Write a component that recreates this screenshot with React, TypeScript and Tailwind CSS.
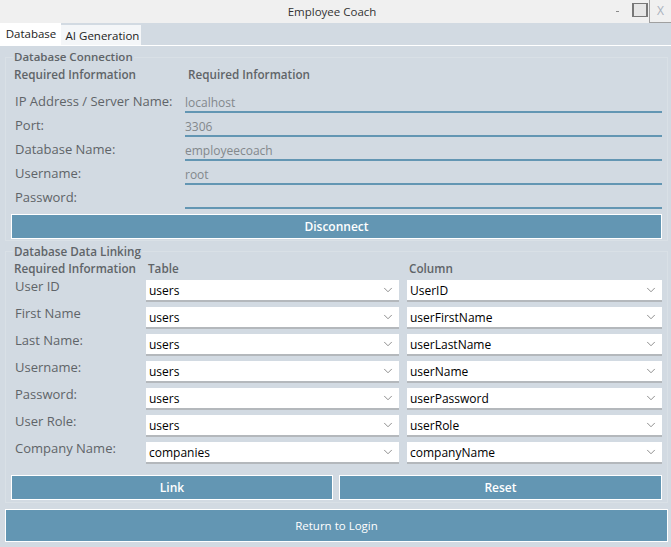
import React from "react";
import { ChevronDown } from "lucide-react";

const connection = [
  { label: "IP Address / Server Name:", value: "localhost" },
  { label: "Port:", value: "3306" },
  { label: "Database Name:", value: "employeecoach" },
  { label: "Username:", value: "root" },
  { label: "Password:", value: "" },
];

const links = [
  { label: "User ID", table: "users", column: "UserID" },
  { label: "First Name", table: "users", column: "userFirstName" },
  { label: "Last Name:", table: "users", column: "userLastName" },
  { label: "Username:", table: "users", column: "userName" },
  { label: "Password:", table: "users", column: "userPassword" },
  { label: "User Role:", table: "users", column: "userRole" },
  { label: "Company Name:", table: "companies", column: "companyName" },
];

function Select({ value, className }: { value: string; className: string }) {
  return (
    <div className={`h-[22px] bg-white border-b-2 border-[#b4b8bc] flex items-center justify-between pl-[3px] pr-[4px] text-[12px] text-black ${className}`}>
      <span className="pt-px">{value}</span>
      <ChevronDown className="w-[14px] h-[14px] text-[#666666]" strokeWidth={1.25} />
    </div>
  );
}

function BlueButton({ children, className }: { children: React.ReactNode; className: string }) {
  return (
    <div className={`bg-[#6396b3] border border-white flex items-center justify-center text-white ${className}`}>
      {children}
    </div>
  );
}

export default function App() {
  return (
    <div className="w-[671px] h-[547px] overflow-hidden bg-[#f0f0f0] text-[#5f6468] font-['Open_Sans','Noto_Sans',sans-serif]">
      {/* Title bar */}
      <div className="relative h-[23px] flex items-center justify-center text-[11.5px] text-[#333333]">
        <span className="-ml-[7px]">Employee Coach</span>
        <span className="absolute left-[616px] top-[11px] w-[3px] h-px bg-[#8a8a8a]" />
        <span className="absolute left-[632px] top-[3px] w-[16px] h-[14px] border-x-2 border-y border-[#777777] bg-[#e6e6e6]" />
        <span className="absolute left-[649px] top-0 w-[22px] h-[23px] border-l border-b border-[#a0a0a0] flex items-center justify-center text-[12px] text-[#a9b0bd]">X</span>
      </div>

      {/* Tabs */}
      <div className="h-[23px] bg-[#d2dae2] flex items-start border-b border-white">
        <div className="h-[22px] w-[61px] pl-px bg-white flex items-center justify-center text-[11.5px] text-[#222222]">Database</div>
        <div className="mt-[2px] pt-px pl-[3px] h-[20px] w-[80px] bg-[#f4f6f8] flex items-center justify-center text-[11.5px] text-[#222222]">AI Generation</div>
      </div>

      <div className="h-[501px] bg-[#d2dae2] px-[2px]">
        <div className="h-[497px] px-[3px] pt-[4px]">
          {/* Database connection */}
          <fieldset className="h-[191px] border border-[#d9e0e6] px-[5px] mb-[3px]">
            <legend className="ml-[2px] px-[1px] text-[11.5px] font-semibold leading-[14px]">Database Connection</legend>
            <div className="flex h-[18px] items-center text-[11.7px] font-semibold mt-[2px] ml-[3px]">
              <span className="w-[174px]">Required Information</span>
              <span>Required Information</span>
            </div>
            <div className="mt-[5px]">
              {connection.map((row) => (
                <div key={row.label} className="flex h-[24px]">
                  <span className="w-[174px] ml-[4px] pt-[3px] text-[13px] leading-[18px] shrink-0">{row.label}</span>
                  <div className="w-[477px] ml-[-4px] h-[24px] border-b-2 border-[#6396b3] pt-[5px] text-[12px] leading-[18px] text-[#83888c]">
                    {row.value}
                  </div>
                </div>
              ))}
            </div>
            <BlueButton className="mt-[5px] w-[651px] h-[25px] text-[12px] font-semibold">Disconnect</BlueButton>
          </fieldset>

          {/* Database data linking */}
          <fieldset className="h-[259px] border border-[#d9e0e6] px-[5px]">
            <legend className="ml-[2px] px-[1px] text-[11.7px] font-semibold leading-[14px]">Database Data Linking</legend>
            <div className="flex h-[16px] items-center text-[11.7px] font-semibold mt-[3px] ml-[3px]">
              <span className="w-[134px]">Required Information</span>
              <span className="w-[261px]">Table</span>
              <span>Column</span>
            </div>
            <div className="mt-[3px] flex flex-col gap-[5px]">
              {links.map((row) => (
                <div key={row.label} className="flex h-[22px]">
                  <span className="w-[131px] ml-[4px] -mt-[3px] text-[13px] leading-[18px] shrink-0">{row.label}</span>
                  <Select value={row.table} className="w-[253px]" />
                  <Select value={row.column} className="w-[255px] ml-[8px]" />
                </div>
              ))}
            </div>
            <div className="mt-[11px] flex gap-[6px]">
              <BlueButton className="w-[322px] h-[25px] text-[12px] font-semibold">Link</BlueButton>
              <BlueButton className="w-[323px] h-[25px] text-[12px] font-semibold">Reset</BlueButton>
            </div>
          </fieldset>

          <BlueButton className="mt-[6px] w-[663px] h-[33px] text-[11.5px]">Return to Login</BlueButton>
        </div>
      </div>
    </div>
  );
}
